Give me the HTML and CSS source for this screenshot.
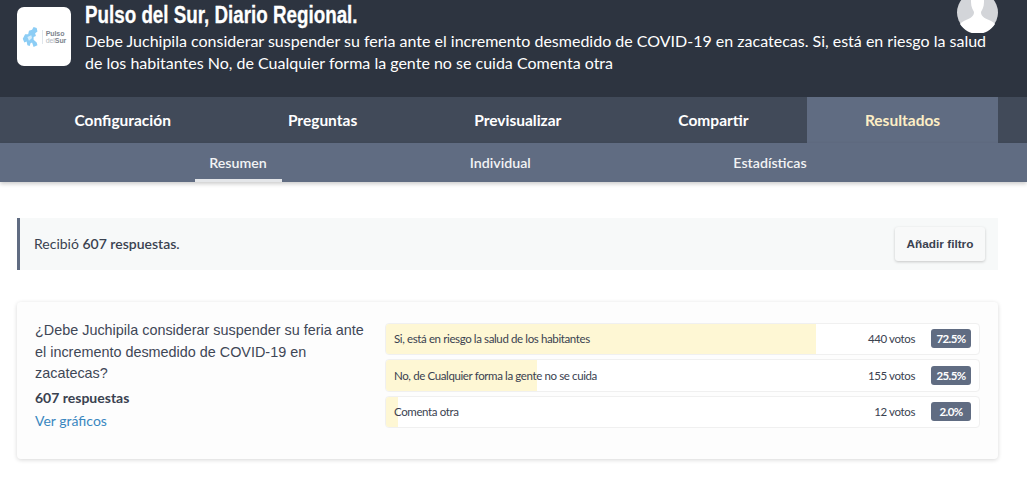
FILE: index.html
```html
<!DOCTYPE html>
<html lang="es">
<head>
<meta charset="utf-8">
<title>Resultados</title>
<link rel="stylesheet" href="styles.css">
</head>
<body>
<header class="header">
  <div class="logo">
    <svg class="logo-map" viewBox="0 0 22 22" preserveAspectRatio="none" aria-hidden="true">
      <path fill="#8ccdf5" d="M1 13 L4 8 L8 8 L9 4 L13 3 L15 0 L19 1 L20 5 L17 7 L18 10 L15 11 L15 14 L19 17 L20 20 L15 22 L13 17 L11 18 L10 21 L7 20 L6 16 L3 17 Z"/>
      <path fill="#d5edfb" d="M7 11 L12 9 L13 12 L9 15 Z"/>
    </svg>
    <span class="logo-sep"></span>
    <span class="logo-text"><b>Pulso</b><span><i>del</i><b>Sur</b></span></span>
  </div>
  <div class="head-text">
    <h1 class="title">Pulso del Sur, Diario Regional.</h1>
    <p class="desc">Debe Juchipila considerar suspender su feria ante el incremento desmedido de COVID-19 en zacatecas. Si, está en riesgo la salud de los habitantes No, de Cualquier forma la gente no se cuida Comenta otra</p>
  </div>
  <div class="avatar">
    <svg viewBox="0 0 41 41" width="41" height="41" aria-hidden="true">
      <circle cx="20.5" cy="20.5" r="20.5" fill="#d3d5d9"/>
      <path fill="#fff" d="M14 0 L14 10 C14 15 16 18 17 20 C17 24 14 26 9 28 C6 29 4 31 3 32 A20.5 20.5 0 0 0 38 32 C37 31 35 29 32 28 C27 26 24 24 24 20 C25 18 27 15 27 10 L27 0 Z"/>
    </svg>
  </div>
</header>
<nav class="tabs">
  <a class="tab">Configuración</a>
  <a class="tab">Preguntas</a>
  <a class="tab">Previsualizar</a>
  <a class="tab">Compartir</a>
  <a class="tab tab-active">Resultados</a>
</nav>
<nav class="subtabs">
  <a class="subtab subtab-active">Resumen</a>
  <a class="subtab">Individual</a>
  <a class="subtab">Estadísticas</a>
</nav>
<main class="main">
  <section class="summary">
    <p class="summary-text">Recibió <strong>607 respuestas.</strong></p>
    <button class="filter-btn">Añadir filtro</button>
  </section>
  <section class="card">
    <div class="question">
      <p class="q-text">¿Debe Juchipila considerar suspender su feria ante el incremento desmedido de COVID-19 en zacatecas?</p>
      <p class="q-count">607 respuestas</p>
      <a class="q-link">Ver gráficos</a>
    </div>
    <div class="answers">
      <div class="answer">
        <div class="fill" style="width:72.5%"></div>
        <span class="a-label">Si, está en riesgo la salud de los habitantes</span>
        <span class="a-votes">440 votos</span>
        <span class="a-badge">72.5%</span>
      </div>
      <div class="answer">
        <div class="fill" style="width:25.5%"></div>
        <span class="a-label">No, de Cualquier forma la gente no se cuida</span>
        <span class="a-votes">155 votos</span>
        <span class="a-badge">25.5%</span>
      </div>
      <div class="answer">
        <div class="fill" style="width:2%"></div>
        <span class="a-label">Comenta otra</span>
        <span class="a-votes">12 votos</span>
        <span class="a-badge">2.0%</span>
      </div>
    </div>
  </section>
</main>
</body>
</html>
```

FILE: styles.css
```css
* { box-sizing: border-box; }
html, body { margin: 0; padding: 0; }
body {
  font-family: Lato, "Liberation Sans", sans-serif;
  background: #fff;
  color: #3a4250;
  height: 489px;
  overflow: hidden;
}
.header {
  position: relative;
  height: 97px;
  background: #2d3440;
  display: flex;
  align-items: flex-start;
  padding: 7px 0 0 17px;
}
.logo {
  width: 54px;
  height: 59px;
  background: #fff;
  border-radius: 7px;
  flex: none;
  display: flex;
  align-items: center;
  justify-content: center;
  gap: 3px;
}
.logo-map { width: 17px; height: 20px; }
.logo-sep { width: 1px; height: 14px; background: #dfe6ec; }
.logo-text {
  display: flex;
  flex-direction: column;
  font-family: "Liberation Sans", sans-serif;
  font-size: 7px;
  line-height: 7px;
  letter-spacing: -.1px;
  color: #7d848e;
}
.logo-text i { font-style: normal; font-weight: 400; color: #b4b9bf; }
.head-text { margin-left: 14px; width: 915px; margin-top: -7px; }
.title {
  margin: 0;
  font-family: "Liberation Sans", sans-serif;
  font-weight: 700;
  font-size: 24px;
  line-height: 30px;
  color: #fff;
  white-space: nowrap;
  -webkit-text-stroke: .3px #fff;
  transform: scaleX(.783);
  transform-origin: left center;
}
.desc {
  margin: 0;
  font-size: 16px;
  line-height: 21.5px;
  color: #fff;
}
.avatar {
  position: absolute;
  left: 957px;
  top: -8px;
  width: 41px;
  height: 41px;
}
.avatar svg { display: block; }
.tabs {
  height: 46px;
  background: #414a59;
  display: flex;
  padding: 0 29px 0 16px;
}
.tab {
  flex: 1 1 auto;
  padding: 0 58px;
  text-align: center;
  font-weight: 700;
  font-size: 15.5px;
  line-height: 47px;
  color: #fff;
}
.tab-active { flex-grow: 0; width: 191px; padding: 0; background: #606c82; color: #fdeec5; }
.subtabs {
  height: 39px;
  background: #606c82;
  display: flex;
  justify-content: space-around;
  padding: 0 119px 0 108px;
  box-shadow: 0 2px 4px rgba(0, 0, 0, .2);
  position: relative;
}
.subtab {
  padding: 0 14.5px;
  font-weight: 600;
  font-size: 14.2px;
  line-height: 40px;
  color: #f2f3f5;
  height: 39px;
}
.subtab-active { width: 87px; border-bottom: 3px solid #e4e6e9; }
.main { padding: 36px 29px 0 17px; }
.summary {
  height: 52px;
  background: #f7f9f9;
  border-left: 3px solid #606c82;
  display: flex;
  align-items: center;
  justify-content: space-between;
  padding: 0 13px 0 14px;
}
.summary-text { margin: 0 0 2px; font-size: 14px; color: #3a4250; }
.summary-text strong { font-weight: 600; }
.filter-btn {
  width: 90px;
  height: 34px;
  border: 0;
  border-radius: 3px;
  background: #f8f9f9;
  box-shadow: 0 1px 3px rgba(0, 0, 0, .2);
  font-family: "Liberation Sans", sans-serif;
  font-weight: 700;
  font-size: 11.8px;
  color: #3a4250;
  padding: 0;
}
.card {
  margin-top: 32px;
  height: 157px;
  background: #fdfdfd;
  border-radius: 4px;
  box-shadow: 0 1px 4px rgba(0, 0, 0, .16);
  display: flex;
  padding: 21px 18px 0 18px;
}
.question { width: 350px; flex: none; margin-top: -3px; padding-right: 12px; }
.q-text {
  margin: 0;
  font-family: "Liberation Sans", Arial, sans-serif;
  font-size: 14.4px;
  line-height: 21.5px;
  color: #3f4756;
}
.q-count {
  margin: 3px 0 0;
  font-weight: 700;
  font-size: 14px;
  line-height: 20px;
  color: #3a4250;
}
.q-link {
  display: block;
  margin-top: 3px;
  font-size: 14px;
  line-height: 20px;
  color: #3a87c0;
}
.answers {
  width: 595px;
  flex: none;
  display: flex;
  flex-direction: column;
  gap: 4px;
}
.answer {
  position: relative;
  height: 32.4px;
  background: #fff;
  border: 1px solid #f0f0f0;
  border-radius: 4px;
  display: flex;
  align-items: center;
  padding: 0 8px 1px;
  font-size: 11.5px;
  letter-spacing: -.38px;
  color: #3a4250;
  overflow: hidden;
}
.fill {
  position: absolute;
  left: 0;
  top: 0;
  bottom: 0;
  background: #fef7d4;
}
.a-label { position: relative; flex: 1; }
.a-votes { position: relative; margin-right: 16px; }
.a-badge {
  position: relative;
  width: 40px;
  height: 19px;
  background: #606c82;
  color: #fff;
  font-weight: 700;
  letter-spacing: -.6px;
  border-radius: 3px;
  text-align: center;
  line-height: 19px;
}
```
